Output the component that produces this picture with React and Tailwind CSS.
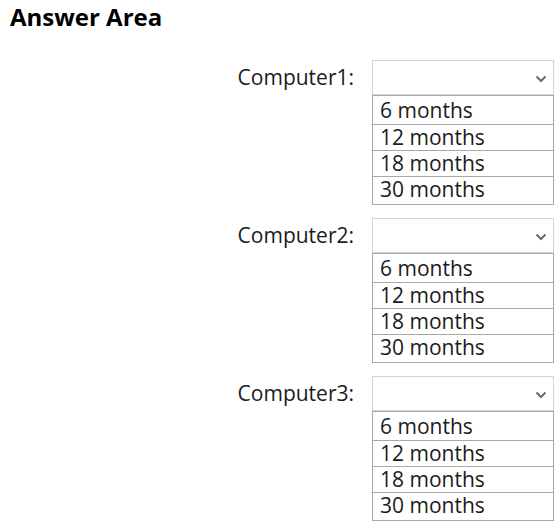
import React from "react";

const options = ["6 months", "12 months", "18 months", "30 months"];
const computers = ["Computer1:", "Computer2:", "Computer3:"];

const Chevron = () => (
  <svg width="12" height="8" viewBox="0 0 12 8" fill="none">
    <path d="M1.5 1.5 L6 6 L10.5 1.5" stroke="#6b6b6b" strokeWidth="2" />
  </svg>
);

const DropGroup = ({ label }) => {
  return (
    <div className="flex justify-end pr-[5px]">
      <div className="h-[35px] flex items-center pr-[18px] text-[21px] text-[#1b1b1b]">
        {label}
      </div>
      <div className="w-[182px] flex flex-col">
        <div className="h-[35px] border border-[#d4d4d4] flex items-center justify-end pr-[6px] pt-[3px]">
          <Chevron />
        </div>
        <div className="h-[110px] border border-[#a9a9a9] py-[2px] flex flex-col">
          {options.map((opt, i) => (
            <div
              key={opt}
              className={`h-[26px] pl-[7px] text-[21px] leading-[24px] text-[#1b1b1b] ${
                i > 0 ? "border-t border-[#a9a9a9]" : ""
              }`}
            >
              {opt}
            </div>
          ))}
        </div>
      </div>
    </div>
  );
};

export default function App() {
  return (
    <div
      className="w-[559px] h-[526px] bg-white overflow-hidden"
      style={{ fontFamily: '"Open Sans", "Noto Sans", sans-serif' }}
    >
      <div className="pl-[10px] h-[60px] text-[24px] leading-[34px] font-bold text-black">
        Answer Area
      </div>
      <div className="flex flex-col gap-[13px]">
        {computers.map((c) => (
          <DropGroup key={c} label={c} />
        ))}
      </div>
    </div>
  );
}
